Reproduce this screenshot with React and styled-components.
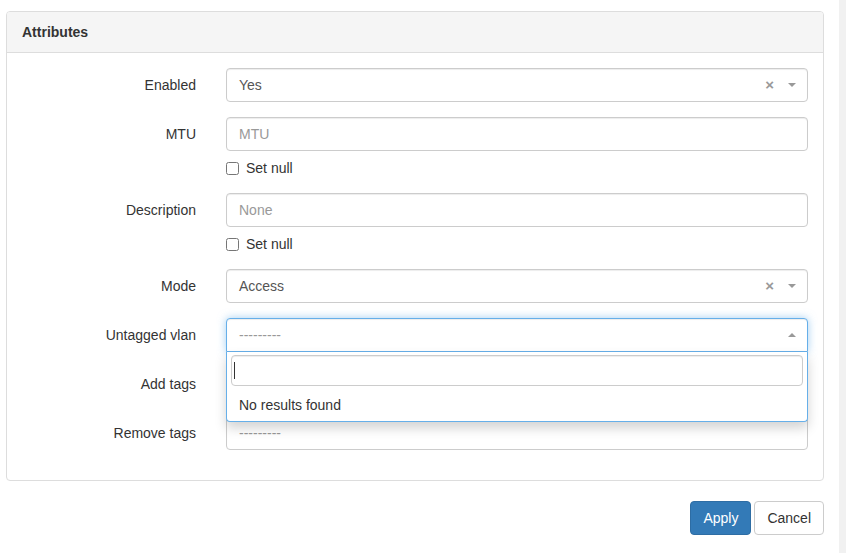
import React from 'react';
import styled, { createGlobalStyle } from 'styled-components';

const GlobalStyle = createGlobalStyle`
  html, body {
    margin: 0;
    padding: 0;
    background: #fff;
  }
  body {
    font-family: 'Liberation Sans', Arial, Helvetica, sans-serif;
    font-size: 14px;
    line-height: 20px;
    color: #333;
  }
  * {
    box-sizing: border-box;
  }
`;

const Page = styled.div`
  display: flex;
  height: 100vh;
  overflow: hidden;
`;

const Main = styled.div`
  flex: 1;
  padding: 11px 15px 0 6px;
`;

const Track = styled.div`
  width: 7px;
  background: #f1f1f1;
`;

const Panel = styled.div`
  border: 1px solid #ddd;
  border-radius: 4px;
  margin-bottom: 20px;
  background: #fff;
`;

const PanelHeading = styled.div`
  padding: 10px 15px;
  background: #f5f5f5;
  border-bottom: 1px solid #ddd;
  border-radius: 3px 3px 0 0;
  font-weight: bold;
  font-size: 14px;
  line-height: 20px;
  color: #333;
`;

const PanelBody = styled.div`
  display: flow-root;
  padding: 15px;
`;

const FormGroup = styled.div`
  display: grid;
  grid-template-columns: 204px 1fr;
  margin: 0 -15px 15px;
`;

const Label = styled.label`
  padding: 7px 15px 0;
  text-align: right;
  line-height: 20px;
  color: #333;
`;

const Field = styled.div`
  padding: 0 15px;
  position: relative;
`;

const Input = styled.input`
  display: block;
  width: 100%;
  height: 34px;
  padding: 6px 12px;
  font: inherit;
  font-size: 14px;
  color: #555;
  border: 1px solid #ccc;
  border-radius: 4px;
  box-shadow: inset 0 1px 1px rgba(0, 0, 0, 0.075);
  outline: none;

  &::placeholder {
    color: #999;
  }
`;

const CheckRow = styled.label`
  display: flex;
  align-items: center;
  gap: 7px;
  padding-top: 7px;
  height: 27px;
  line-height: 20px;
  color: #333;

  input {
    margin: 0;
    width: 13px;
    height: 13px;
  }
`;

const Selection = styled.div`
  display: flex;
  align-items: center;
  height: 34px;
  padding: 0 12px;
  border: 1px solid ${(p) => (p.$open ? '#66afe9' : '#ccc')};
  border-radius: ${(p) => (p.$open ? '4px 4px 0 0' : '4px')};
  box-shadow: ${(p) =>
    p.$open
      ? 'inset 0 1px 1px rgba(0,0,0,.075), 0 0 8px rgba(102,175,233,.6)'
      : 'inset 0 1px 1px rgba(0,0,0,.075)'};
  background: #fff;
`;

const Value = styled.span`
  flex: 1;
  color: ${(p) => (p.$placeholder ? '#999' : '#555')};
`;

const Clear = styled.span`
  color: #999;
  font-size: 15px;
  font-weight: bold;
  margin-right: 14px;
`;

const Arrow = styled.span`
  width: 0;
  height: 0;
  border-style: solid;
  border-width: ${(p) => (p.$up ? '0 4px 4px' : '4px 4px 0')};
  border-color: ${(p) =>
    p.$up ? 'transparent transparent #999' : '#999 transparent transparent'};
  margin-right: -1px;
`;

const Dropdown = styled.div`
  position: absolute;
  top: 34px;
  left: 15px;
  right: 15px;
  z-index: 10;
  background: #fff;
  border: 1px solid #66afe9;
  border-top: none;
  border-radius: 0 0 4px 4px;
  box-shadow: 0 6px 12px rgba(0, 0, 0, 0.175);
`;

const SearchWrap = styled.div`
  padding: 3px 4px 0;
`;

const Search = styled.div`
  height: 31px;
  border: 1px solid #ccc;
  border-radius: 4px;
  box-shadow: inset 0 1px 1px rgba(0, 0, 0, 0.075);
  display: flex;
  align-items: center;
  padding-left: 2px;
`;

const Caret = styled.span`
  width: 1px;
  height: 17px;
  background: #333;
`;

const Message = styled.div`
  padding: 9px 12px 6px;
  line-height: 20px;
  color: #333;
`;

const Actions = styled.div`
  display: flex;
  justify-content: flex-end;
  gap: 3px;
`;

const Button = styled.button`
  height: 34px;
  padding: 6px 12px;
  font: inherit;
  font-size: 14px;
  line-height: 20px;
  border-radius: 4px;
  border: 1px solid ${(p) => (p.$primary ? '#2e6da4' : '#ccc')};
  background: ${(p) => (p.$primary ? '#337ab7' : '#fff')};
  color: ${(p) => (p.$primary ? '#fff' : '#333')};
  cursor: pointer;
`;

const Select = ({ value, placeholder, clearable, open, multiple, children }) => (
  <>
    <Selection $open={open}>
      <Value $placeholder={!value}>{value || placeholder}</Value>
      {clearable && <Clear>×</Clear>}
      {!multiple && <Arrow $up={open} />}
    </Selection>
    {children}
  </>
);

const Row = ({ label, children }) => (
  <FormGroup>
    <Label>{label}</Label>
    <Field>{children}</Field>
  </FormGroup>
);

const App = () => (
  <Page>
    <GlobalStyle />
    <Main>
      <Panel>
        <PanelHeading>Attributes</PanelHeading>
        <PanelBody>
          <Row label="Enabled">
            <Select value="Yes" clearable />
          </Row>
          <Row label="MTU">
            <Input placeholder="MTU" />
            <CheckRow>
              <input type="checkbox" />
              Set null
            </CheckRow>
          </Row>
          <Row label="Description">
            <Input placeholder="None" />
            <CheckRow>
              <input type="checkbox" />
              Set null
            </CheckRow>
          </Row>
          <Row label="Mode">
            <Select value="Access" clearable />
          </Row>
          <Row label="Untagged vlan">
            <Select placeholder="---------" open>
              <Dropdown>
                <SearchWrap>
                  <Search>
                    <Caret />
                  </Search>
                </SearchWrap>
                <Message>No results found</Message>
              </Dropdown>
            </Select>
          </Row>
          <Row label="Add tags">
            <Select placeholder="---------" multiple />
          </Row>
          <Row label="Remove tags">
            <Select placeholder="---------" multiple />
          </Row>
        </PanelBody>
      </Panel>
      <Actions>
        <Button $primary>Apply</Button>
        <Button>Cancel</Button>
      </Actions>
    </Main>
    <Track />
  </Page>
);

export default App;
